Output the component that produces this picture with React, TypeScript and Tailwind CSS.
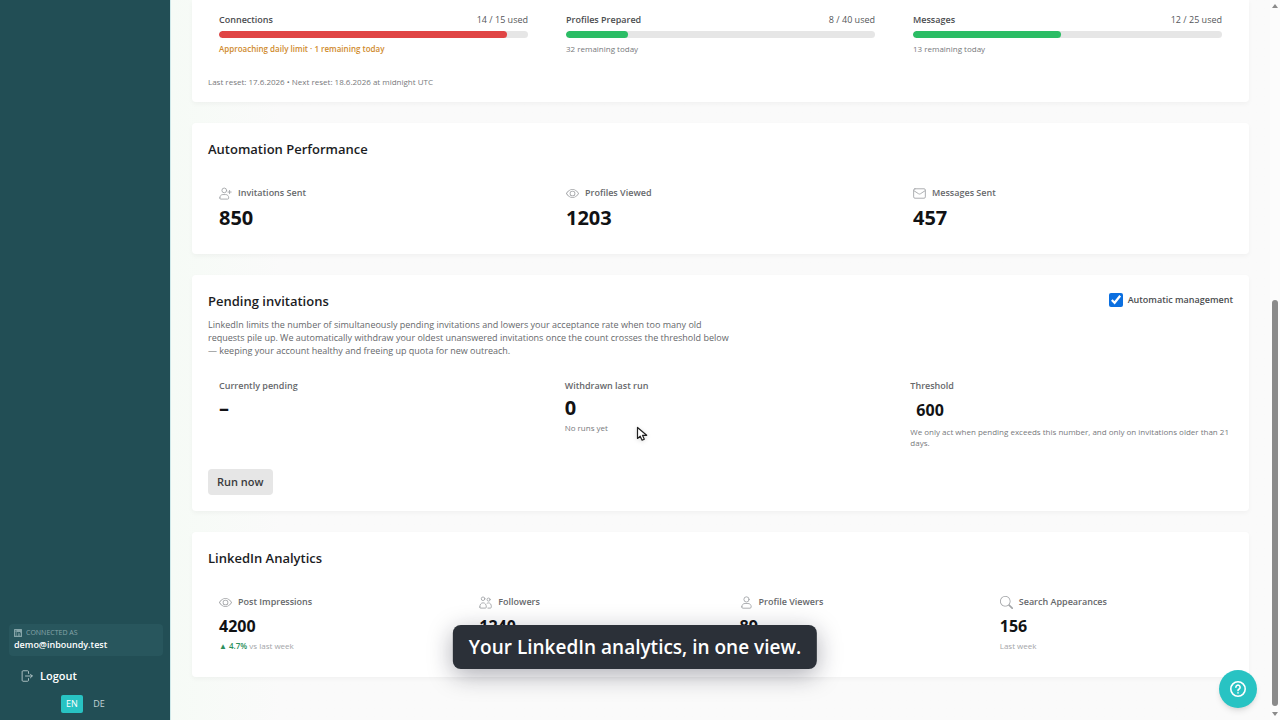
import type { ReactNode } from "react";
import { BsEye, BsLinkedin, BsSearch } from "react-icons/bs";

const Icon = ({ children }: { children: ReactNode }) => (
  <svg
    width="1em"
    height="1em"
    viewBox="0 0 16 16"
    fill="none"
    stroke="currentColor"
    strokeWidth="1.1"
    strokeLinecap="round"
    strokeLinejoin="round"
  >
    {children}
  </svg>
);

const PersonIcon = () => (
  <Icon>
    <circle cx="8" cy="4.2" r="3.2" />
    <path d="M2.2 13.4c0-2.6 1.7-4.2 4-4.2h3.6c2.3 0 4 1.6 4 4.2 0 .9-.6 1.6-1.5 1.6H3.7c-.9 0-1.5-.7-1.5-1.6z" />
  </Icon>
);

const PersonPlusIcon = () => (
  <Icon>
    <circle cx="6.5" cy="4.2" r="2.9" />
    <path d="M1 13.5c0-2.5 1.6-4.2 3.8-4.2h3.4c2.2 0 3.8 1.7 3.8 4.2 0 .8-.5 1.4-1.3 1.4H2.3c-.8 0-1.3-.6-1.3-1.4z" />
    <path d="M13 4.2v4M11 6.2h4" />
  </Icon>
);

const PeopleIcon = () => (
  <Icon>
    <circle cx="5" cy="3.4" r="2.2" />
    <circle cx="11.8" cy="4.4" r="1.9" />
    <path d="M1 13.6c0-3 1.4-5.2 4-5.2s4 2.2 4 5.2c0 .8-.4 1.3-1.2 1.3H2.2c-.8 0-1.2-.5-1.2-1.3z" />
    <path d="M10 8.9c.5-.3 1.1-.4 1.8-.4 2.2 0 3.4 1.9 3.4 4.8 0 1-.4 1.6-1.2 1.6h-3" />
  </Icon>
);

const EnvelopeIcon = () => (
  <Icon>
    <rect x=".8" y="2.2" width="14.4" height="11.6" rx="1.6" />
    <path d="M1.2 4.6 6.8 8.300a2.200 2.200 0 0 0 2.400 0l5.600-3.700" />
  </Icon>
);

const LogoutIcon = () => (
  <Icon>
    <path d="M10 4.5V2.2c0-.7-.5-1.2-1.2-1.2H2.7C2 1 1.5 1.5 1.5 2.2v11.600c0 .7.5 1.2 1.2 1.2h6.100c.7 0 1.2-.5 1.2-1.2v-2.300" />
    <path d="M6 8h9M12.5 5.500 15 8l-2.500 2.500" />
  </Icon>
);

const quotas = [
  {
    name: "Connections",
    used: 14,
    limit: 15,
    note: "Approaching daily limit · 1 remaining today",
    warning: true,
  },
  { name: "Profiles Prepared", used: 8, limit: 40, note: "32 remaining today" },
  { name: "Messages", used: 12, limit: 25, note: "13 remaining today" },
];

const performance = [
  { name: "Invitations Sent", value: 850, icon: <PersonPlusIcon /> },
  { name: "Profiles Viewed", value: 1203, icon: <BsEye /> },
  { name: "Messages Sent", value: 457, icon: <EnvelopeIcon /> },
];

const analytics = [
  { name: "Post Impressions", value: 4200, icon: <BsEye />, change: "4.7%" },
  { name: "Followers", value: 1240, icon: <PeopleIcon /> },
  { name: "Profile Viewers", value: 89, icon: <PersonIcon /> },
  {
    name: "Search Appearances",
    value: 156,
    icon: <BsSearch />,
    note: "Last week",
  },
];

const Card = ({
  title,
  children,
}: {
  title: string;
  children: ReactNode;
}) => (
  <section className="rounded-sm bg-white p-4 shadow-[0_2px_5px_rgba(0,0,0,0.04)]">
    <h2 className="text-[13px] leading-[21px] font-semibold text-[#1c1d1f]">
      {title}
    </h2>
    {children}
  </section>
);

const StatLabel = ({ icon, name }: { icon: ReactNode; name: string }) => (
  <div className="flex items-center gap-1.5 text-[9px] leading-4 font-semibold text-[#66686b]">
    <span className="text-[13px] text-[#a3a5a8]">{icon}</span>
    {name}
  </div>
);

const Sidebar = () => (
  <aside className="flex w-[171px] shrink-0 flex-col justify-end border-r border-[#cfe9ea] bg-[#224e55] pr-[7px] pb-[7px] pl-[9px] text-white">
    <div className="rounded bg-[#28565d] px-[5px] py-1">
      <div className="flex items-center gap-1 text-[7px] leading-[10px] text-[#86a5a9]">
        <BsLinkedin className="text-[8px]" />
        CONNECTED AS
      </div>
      <div className="text-[9px] leading-[14px] font-semibold">
        demo@inboundy.test
      </div>
    </div>
    <a
      href="#logout"
      className="mt-3 flex items-center gap-[7px] px-3 text-[11px] leading-4 font-semibold"
    >
      <span className="text-xs text-[#c3d3d5]">
        <LogoutIcon />
      </span>
      Logout
    </a>
    <div className="mt-[11px] flex justify-center gap-1 text-[9px] leading-[18px]">
      <button className="w-[22px] rounded-xs bg-[#28c3c3]">EN</button>
      <button className="w-6 text-[#c3d3d5]">DE</button>
    </div>
  </aside>
);

const App = () => {
  return (
    <div className="flex h-screen overflow-hidden bg-[#fafafa] font-['Open_Sans',sans-serif]">
      <div className="relative flex min-w-0 flex-1">
        <Sidebar />

        <main className="flex min-w-0 flex-1 flex-col gap-[21px] bg-linear-to-r from-[#f6fbf6] to-[#fafafa] to-10% px-[21px]">
          <section className="rounded-b-sm bg-white px-4 pt-3 pb-3 shadow-[0_2px_5px_rgba(0,0,0,0.04)]">
            <div className="grid grid-cols-3 gap-4">
              {quotas.map((quota) => (
                <div key={quota.name} className="px-[11px]">
                  <div className="flex justify-between text-[9px] leading-4 text-[#55575a]">
                    <span className="font-semibold text-[#4b4d50]">
                      {quota.name}
                    </span>
                    <span>
                      {quota.used} / {quota.limit} used
                    </span>
                  </div>
                  <div className="mt-[3px] h-[7px] overflow-hidden rounded-full bg-[#e6e6e6]">
                    <div
                      className={`h-full rounded-full ${
                        quota.warning ? "bg-[#e04545]" : "bg-[#2bbd65]"
                      }`}
                      style={{ width: `${(quota.used / quota.limit) * 100}%` }}
                    />
                  </div>
                  <p
                    className={`mt-[3px] text-[8px] leading-4 ${
                      quota.warning
                        ? "font-semibold text-[#cf8a2c]"
                        : "text-[#77797c]"
                    }`}
                  >
                    {quota.note}
                  </p>
                </div>
              ))}
            </div>
            <p className="mt-4 text-[8px] leading-[17px] text-[#77797c]">
              Last reset: 17.6.2026 • Next reset: 18.6.2026 at midnight UTC
            </p>
          </section>

          <Card title="Automation Performance">
            <div className="mt-[13px] grid grid-cols-3 gap-4">
              {performance.map((stat) => (
                <div key={stat.name} className="px-[11px] pt-3 pb-1.5">
                  <StatLabel icon={stat.icon} name={stat.name} />
                  <div className="mt-[3px] text-xl leading-7 font-bold text-[#111214]">
                    {stat.value}
                  </div>
                </div>
              ))}
            </div>
          </Card>

          <div className="relative">
            <Card title="Pending invitations">
              <label className="absolute top-4 right-4 flex items-center gap-[5px] text-[9px] leading-[18px] font-semibold text-[#4b4d50]">
                <input
                  type="checkbox"
                  defaultChecked
                  className="size-3.5 accent-[#0b6fe0]"
                />
                Automatic management
              </label>
              <p className="mt-1.5 max-w-[528px] text-[9px] leading-[13px] text-[#66686b]">
                LinkedIn limits the number of simultaneously pending invitations
                and lowers your acceptance rate when too many old requests pile
                up. We automatically withdraw your oldest unanswered invitations
                once the count crosses the threshold below — keeping your
                account healthy and freeing up quota for new outreach.
              </p>
              <div className="mt-[9px] grid grid-cols-3 gap-3 text-[8px] text-[#77797c]">
                <div className="px-[11px] pt-3">
                  <h3 className="text-[9px] leading-4 font-semibold text-[#66686b]">
                    Currently pending
                  </h3>
                  <div className="text-xl leading-7 font-bold text-[#111214]">
                    –
                  </div>
                </div>
                <div className="px-[11px] pt-3">
                  <h3 className="text-[9px] leading-4 font-semibold text-[#66686b]">
                    Withdrawn last run
                  </h3>
                  <div className="text-xl leading-7 font-bold text-[#111214]">
                    0
                  </div>
                  <p className="leading-3">No runs yet</p>
                </div>
                <div className="pt-3 pb-[11px] pl-[11px]">
                  <label
                    htmlFor="threshold"
                    className="block text-[9px] leading-4 font-semibold text-[#66686b]"
                  >
                    Threshold
                  </label>
                  <input
                    id="threshold"
                    type="text"
                    defaultValue="600"
                    className="block h-8 w-20 px-1.5 text-base font-bold text-[#111214]"
                  />
                  <p className="leading-[11px]">
                    We only act when pending exceeds this number, and only on
                    invitations older than 21 days.
                  </p>
                </div>
              </div>
              <button className="mt-2.5 block h-[26px] rounded bg-[#e6e6e6] px-[9px] text-[11px] font-semibold text-[#3a3b3d]">
                Run now
              </button>
            </Card>
          </div>

          <Card title="LinkedIn Analytics">
            <div className="mt-[13px] grid grid-cols-4 gap-4">
              {analytics.map((stat) => (
                <div key={stat.name} className="px-[11px] pt-3 pb-[9px]">
                  <StatLabel icon={stat.icon} name={stat.name} />
                  <div className="mt-1 text-base leading-6 font-bold text-[#111214]">
                    {stat.value}
                  </div>
                  <p className="mt-0.5 text-[8px] leading-3 text-[#a3a5a8]">
                    {stat.change && (
                      <span className="font-semibold text-[#2c8f5c]">
                        ▲ {stat.change}{" "}
                      </span>
                    )}
                    {stat.change ? "vs last week" : stat.note}
                  </p>
                </div>
              ))}
            </div>
          </Card>
        </main>

        {/* caption */}
        <div className="absolute bottom-[51px] left-1/2 -translate-x-1/2 rounded-lg bg-[#2b3038] px-4 text-[19px] leading-[44px] font-semibold whitespace-nowrap text-white shadow-[0_6px_24px_rgba(20,20,40,0.35)]">
          Your LinkedIn analytics, in one view.
        </div>

        <button
          aria-label="Help"
          className="absolute right-[13px] bottom-3 flex size-[38px] items-center justify-center rounded-full bg-[#28c3c3] text-white shadow-md"
        >
          <svg
            width="18"
            height="18"
            viewBox="0 0 18 18"
            fill="none"
            stroke="currentColor"
            strokeWidth="1.6"
            strokeLinecap="round"
          >
            <circle cx="9" cy="9" r="7.2" />
            <path d="M6.9 7.2a2.1 2.1 0 1 1 3.2 1.8c-.7.4-1.1.8-1.1 1.6M9 12.900v.1" />
          </svg>
        </button>

        {/* mouse pointer */}
        <svg
          className="absolute top-[426px] left-[636px] drop-shadow-sm"
          width="13"
          height="16"
          viewBox="0 0 13 16"
        >
          <path
            d="M1.5 1.5v11l2.7-2.3 1.9 4 2.2-1-1.8-3.900h4.200z"
            fill="#fff"
            stroke="#222"
            strokeWidth="1.2"
            strokeLinejoin="round"
          />
        </svg>
      </div>

      {/* scrollbar */}
      <div className="flex w-2.5 flex-col items-center justify-between bg-[#fcfcfc] py-1 text-[#8b8b8b]">
        <svg width="6" height="4" viewBox="0 0 6 4" fill="currentColor">
          <path d="M0 4 3 0l3 4z" />
        </svg>
        <div className="mt-auto mb-1.5 h-[57%] w-1.5 rounded-full bg-[#8b8b8b]" />
        <svg width="6" height="4" viewBox="0 0 6 4" fill="currentColor">
          <path d="M0 0h6L3 4z" />
        </svg>
      </div>
    </div>
  );
};

export default App;
